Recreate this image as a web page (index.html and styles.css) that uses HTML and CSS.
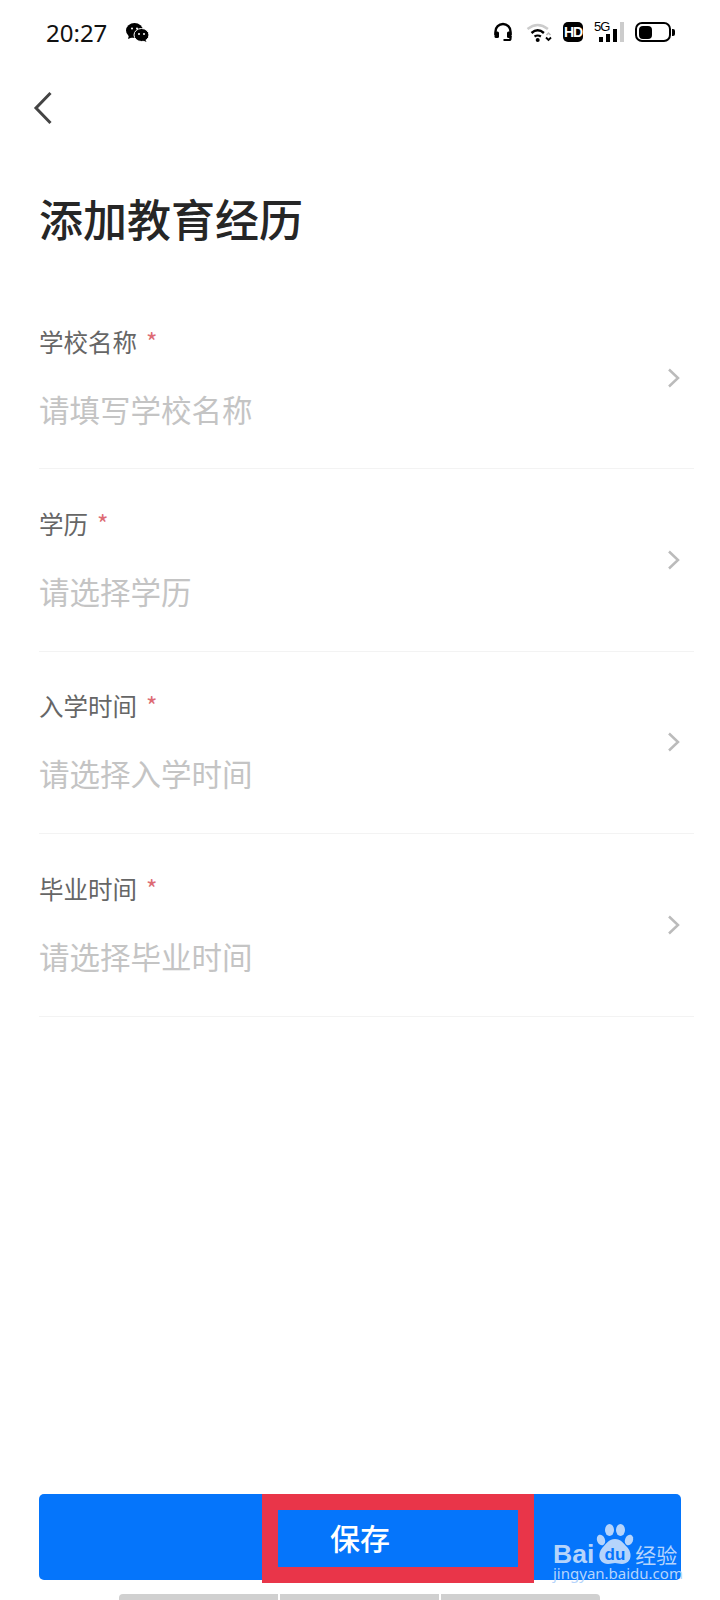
FILE: index.html
```html
<!DOCTYPE html>
<html lang="zh-CN">
<head>
    <meta charset="UTF-8" />
    <meta name="viewport" content="width=device-width, initial-scale=1.0" />
    <title>添加教育经历</title>
    <link rel="stylesheet" href="styles.css">
</head>
<body>

    <div class="status-bar">
        <div class="status-left">
            <span class="clock">20:27</span>
            <svg class="wechat" width="23" height="19" viewBox="0 0 23 19">
                <ellipse cx="8.500" cy="7.500" rx="8.500" ry="7.500" fill="#000" />
                <path d="M3 12l-1 4 5-2z" fill="#000" />
                <ellipse cx="15.500" cy="12" rx="7.500" ry="6.500" fill="#000" stroke="#fff" stroke-width="1" />
                <path d="M19 16l1.500 3-4.500-2z" fill="#000" />
                <circle cx="6" cy="5.500" r="1" fill="#fff" />
                <circle cx="11" cy="5.500" r="1" fill="#fff" />
                <circle cx="13" cy="11" r="1" fill="#fff" />
                <circle cx="18" cy="11" r="1" fill="#fff" />
            </svg>
        </div>
        <div class="status-right">
            <svg class="icon-headset" width="20" height="20" viewBox="0 0 20 20" fill="none" stroke="#000">
                <path d="M2.500 13V9.500a7.500 7.500 0 0 1 15 0V13" stroke-width="2.400" />
                <rect x="1.500" y="9.500" width="4.500" height="6.500" rx="1.500" fill="#000" stroke="none" />
                <rect x="14" y="9.500" width="4.500" height="6.500" rx="1.500" fill="#000" stroke="none" />
                <path d="M17.500 14v2.500a1.500 1.500 0 0 1-1.500 1.500h-5.500" stroke-width="2.200" />
            </svg>
            <svg class="icon-wifi" width="27" height="20" viewBox="0 0 27 20" fill="none">
                <path d="M1.500 7Q11.700-1 21.900 7" stroke="#ccc" stroke-width="2.500" />
                <path d="M5.500 11Q11.700 5.500 17.900 11" stroke="#000" stroke-width="2.400" />
                <path d="M8.500 14.500Q11.700 12.500 14.900 14.500" stroke="#000" stroke-width="2.200" />
                <circle cx="11.700" cy="18" r="2" fill="#000" />
                <path d="M20 15.500l2.500 2.500 2.500-2.500" stroke="#000" stroke-width="1.800" />
                <path d="M20.500 13l2-2 2 2" stroke="#bbb" stroke-width="1.500" />
            </svg>
            <span class="hd-badge">HD</span>
            <div class="signal">
                <span class="signal-label">5G</span>
                <div class="signal-bars">
                    <i class="bar bar-1"></i>
                    <i class="bar bar-2"></i>
                    <i class="bar bar-3"></i>
                    <i class="bar bar-4"></i>
                </div>
            </div>
            <div class="battery">
                <div class="battery-body"><div class="battery-level"></div></div>
                <div class="battery-cap"></div>
            </div>
        </div>
    </div>

    <div class="nav">
        <svg width="20" height="34" viewBox="0 0 20 34" fill="none" stroke="#444" stroke-width="3">
            <path d="M17.500 2L3 17l14.500 15" />
        </svg>
    </div>

    <h1 class="title">添加教育经历</h1>

    <div class="form">
        <div class="form-row">
            <div class="field">
                <div class="field-label">学校名称<span class="required">*</span></div>
                <div class="field-value">请填写学校名称</div>
            </div>
            <svg class="arrow" width="14" height="20" viewBox="0 0 14 20" fill="none" stroke="#bbb" stroke-width="2.500">
                <path d="M2 1.500L11 10l-9 8.500" />
            </svg>
        </div>
        <div class="form-row">
            <div class="field">
                <div class="field-label">学历<span class="required">*</span></div>
                <div class="field-value">请选择学历</div>
            </div>
            <svg class="arrow" width="14" height="20" viewBox="0 0 14 20" fill="none" stroke="#bbb" stroke-width="2.500">
                <path d="M2 1.500L11 10l-9 8.500" />
            </svg>
        </div>
        <div class="form-row">
            <div class="field">
                <div class="field-label">入学时间<span class="required">*</span></div>
                <div class="field-value">请选择入学时间</div>
            </div>
            <svg class="arrow" width="14" height="20" viewBox="0 0 14 20" fill="none" stroke="#bbb" stroke-width="2.500">
                <path d="M2 1.500L11 10l-9 8.500" />
            </svg>
        </div>
        <div class="form-row">
            <div class="field">
                <div class="field-label">毕业时间<span class="required">*</span></div>
                <div class="field-value">请选择毕业时间</div>
            </div>
            <svg class="arrow" width="14" height="20" viewBox="0 0 14 20" fill="none" stroke="#bbb" stroke-width="2.500">
                <path d="M2 1.500L11 10l-9 8.500" />
            </svg>
        </div>
    </div>

    <div class="footer">
        <button class="save-btn">保存</button>
        <div class="highlight"></div>
        <div class="watermark">
            <div class="watermark-logo">
                <span class="wm-bai">Bai</span>
                <svg class="wm-paw" width="40" height="41" viewBox="0 0 40 41" fill="#b5d4fb">
                    <ellipse cx="6" cy="16" rx="4" ry="5.500" transform="rotate(-20 6 16)" />
                    <ellipse cx="14.500" cy="6" rx="4.500" ry="6" />
                    <ellipse cx="25.500" cy="6" rx="4.500" ry="6" />
                    <ellipse cx="34" cy="16" rx="4" ry="5.500" transform="rotate(20 34 16)" />
                    <path d="M20 15c6 0 8 4 12 8 5 5 6 16-5 17-3 0-5-1-7-1s-4 1-7 1C2 39 3 28 8 23c4-4 6-8 12-8z" />
                    <text class="wm-du" x="20" y="36" text-anchor="middle">du</text>
                </svg>
                <span class="wm-cn">经验</span>
            </div>
            <div class="wm-url">jingyan.baidu.com</div>
        </div>
    </div>

    <div class="home-bar">
        <i class="home-seg"></i>
        <i class="home-seg"></i>
        <i class="home-seg"></i>
    </div>

</body>
</html>
```

FILE: styles.css
```css
* {
    box-sizing: border-box;
}

body {
    margin: 0;
    width: 720px;
    height: 1600px;
    overflow: hidden;
    background: #fff;
    font-family: "Noto Sans CJK SC", "Noto Sans", sans-serif;
    display: flex;
    flex-direction: column;
}

.status-bar {
    height: 64px;
    padding: 0 45px 0 46px;
    display: flex;
    align-items: center;
    justify-content: space-between;
}

.status-left {
    display: flex;
    align-items: center;
    gap: 19px;
}

.clock {
    font-family: "Noto Sans", sans-serif;
    font-size: 24px;
    color: #111;
}

.status-right {
    display: flex;
    align-items: center;
    gap: 11px;
}

.icon-wifi {
    margin-left: 2px;
}

.hd-badge {
    width: 20px;
    height: 20px;
    margin-left: -1px;
    border-radius: 5px;
    background: #000;
    color: #fff;
    font-family: "Liberation Sans", sans-serif;
    font-size: 14px;
    font-weight: 700;
    letter-spacing: -1px;
    line-height: 20px;
    text-align: center;
}

.signal {
    width: 30px;
    height: 20px;
    position: relative;
}

.signal-label {
    position: absolute;
    left: 0;
    top: -1px;
    font-family: "Liberation Sans", sans-serif;
    font-size: 13px;
    letter-spacing: -1px;
    line-height: 12px;
    color: #000;
}

.signal-bars {
    height: 100%;
    display: flex;
    align-items: flex-end;
    justify-content: flex-end;
    gap: 3px;
}

.bar {
    width: 4px;
    background: #000;
}

.bar-1 { height: 5px; }
.bar-2 { height: 8px; }
.bar-3 { height: 13px; }
.bar-4 { height: 20px; background: #ccc; }

.battery {
    display: flex;
    align-items: center;
    gap: 1px;
}

.battery-body {
    width: 36px;
    height: 20px;
    border: 2.500px solid #000;
    border-radius: 7px;
    padding: 1.500px;
}

.battery-level {
    width: 13px;
    height: 100%;
    background: #000;
    border-radius: 4px;
}

.battery-cap {
    width: 3px;
    height: 7px;
    background: #000;
    border-radius: 0 2px 2px 0;
}

.nav {
    height: 44px;
    margin-top: 22px;
    padding-left: 33px;
    display: flex;
    align-items: center;
}

.title {
    margin: 58px 0 0 39px;
    font-size: 44px;
    font-weight: 500;
    line-height: 60px;
    color: #262626;
}

.form {
    flex: 1;
    padding: 39px 26px 0 39px;
}

.form-row {
    height: 182.5px;
    padding-right: 13px;
    border-bottom: 1px solid #f3f3f3;
    display: flex;
    align-items: center;
    justify-content: space-between;
}

.form-row:first-child {
    height: 182px;
}

.field {
    padding-bottom: 2px;
}

.field-label {
    font-size: 24.500px;
    line-height: 34px;
    color: #666;
}

.required {
    margin-left: 9px;
    color: #dd6b74;
}

.field-value {
    margin-top: 30px;
    font-size: 30.500px;
    line-height: 40px;
    color: #c4c4c4;
}

.footer {
    height: 86px;
    margin: 0 39px;
    position: relative;
}

.save-btn {
    width: 100%;
    height: 100%;
    border: none;
    border-radius: 5px;
    background: #0575fb;
    color: #fff;
    font-family: inherit;
    font-size: 30px;
    font-weight: 500;
}

.highlight {
    position: absolute;
    left: 223px;
    top: 0;
    width: 272px;
    height: 89px;
    border: 16px solid #e93549;
}

.watermark {
    position: absolute;
    right: 1px;
    bottom: -1px;
    width: 127px;
    color: #b5d4fb;
}

.watermark-logo {
    display: flex;
    align-items: flex-end;
}

.wm-bai {
    font-family: "Liberation Sans", sans-serif;
    font-size: 26.500px;
    font-weight: 700;
    line-height: 22px;
}

.wm-paw {
    flex-shrink: 0;
    margin-left: 1px;
}

.wm-du {
    font-family: "Liberation Sans", sans-serif;
    font-size: 17px;
    font-weight: 700;
    fill: #0575fb;
}

.wm-cn {
    font-size: 21px;
    line-height: 22px;
    white-space: nowrap;
}

.wm-url {
    font-family: "Noto Sans", sans-serif;
    font-size: 15px;
    line-height: 16px;
    white-space: nowrap;
}

.home-bar {
    height: 6px;
    margin: 14px 120px 0 119px;
    display: flex;
    gap: 2px;
}

.home-seg {
    flex: 1;
    background: #d0d0d0;
}

.home-seg:first-child {
    border-radius: 4px 0 0 0;
}

.home-seg:last-child {
    border-radius: 0 4px 0 0;
}
```
